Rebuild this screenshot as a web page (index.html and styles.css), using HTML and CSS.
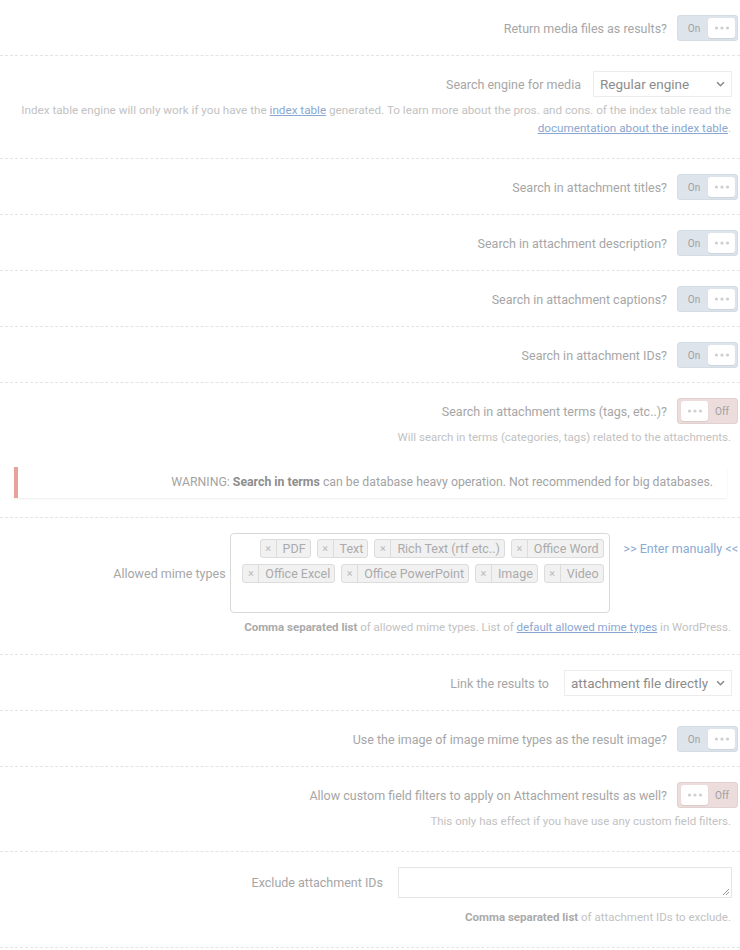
FILE: index.html
```html
<!DOCTYPE html>
<html>
<head>
<meta charset="utf-8">
<link rel="stylesheet" href="styles.css">
</head>
<body>
<div class="page">
  <div class="row">
    <div class="line"><span class="label">Return media files as results?</span><span class="toggle on"><span class="state">On</span><span class="knob"><svg width="16" height="4" viewBox="0 0 16 4"><circle cx="2.5" cy="2" r="1.6"/><circle cx="8" cy="2" r="1.6"/><circle cx="13.5" cy="2" r="1.6"/></svg></span></span></div>
  </div>
  <div class="row">
    <div class="line"><span class="label gap12">Search engine for media</span><span class="select sel-engine"><span>Regular engine</span><svg width="9" height="6" viewBox="0 0 10 7"><path d="M1 1.5 L5 5.5 L9 1.5" fill="none" stroke="#888" stroke-width="1.8"/></svg></span></div>
    <div class="desc wide">Index table engine will only work if you have the <a href="#">index table</a> generated. To learn more about the pros. and cons. of the index table read the <a href="#">documentation about the index table</a>.</div>
  </div>
  <div class="row">
    <div class="line"><span class="label">Search in attachment titles?</span><span class="toggle on"><span class="state">On</span><span class="knob"><svg width="16" height="4" viewBox="0 0 16 4"><circle cx="2.5" cy="2" r="1.6"/><circle cx="8" cy="2" r="1.6"/><circle cx="13.5" cy="2" r="1.6"/></svg></span></span></div>
  </div>
  <div class="row">
    <div class="line"><span class="label">Search in attachment description?</span><span class="toggle on"><span class="state">On</span><span class="knob"><svg width="16" height="4" viewBox="0 0 16 4"><circle cx="2.5" cy="2" r="1.6"/><circle cx="8" cy="2" r="1.6"/><circle cx="13.5" cy="2" r="1.6"/></svg></span></span></div>
  </div>
  <div class="row">
    <div class="line"><span class="label">Search in attachment captions?</span><span class="toggle on"><span class="state">On</span><span class="knob"><svg width="16" height="4" viewBox="0 0 16 4"><circle cx="2.5" cy="2" r="1.6"/><circle cx="8" cy="2" r="1.6"/><circle cx="13.5" cy="2" r="1.6"/></svg></span></span></div>
  </div>
  <div class="row">
    <div class="line"><span class="label">Search in attachment IDs?</span><span class="toggle on"><span class="state">On</span><span class="knob"><svg width="16" height="4" viewBox="0 0 16 4"><circle cx="2.5" cy="2" r="1.6"/><circle cx="8" cy="2" r="1.6"/><circle cx="13.5" cy="2" r="1.6"/></svg></span></span></div>
  </div>
  <div class="row">
    <div class="line"><span class="label">Search in attachment terms (tags, etc..)?</span><span class="toggle off"><span class="knob"><svg width="16" height="4" viewBox="0 0 16 4"><circle cx="2.5" cy="2" r="1.6"/><circle cx="8" cy="2" r="1.6"/><circle cx="13.5" cy="2" r="1.6"/></svg></span><span class="state">Off</span></span></div>
    <div class="desc">Will search in terms (categories, tags) related to the attachments.</div>
    <div class="warning">WARNING: <b>Search in terms</b> can be database heavy operation. Not recommended for big databases.</div>
  </div>
  <div class="row">
    <div class="line top"><span class="label mime-label">Allowed mime types</span>
      <div class="tagbox">
        <span class="tag"><span class="x">×</span><span class="t">PDF</span></span><span class="tag"><span class="x">×</span><span class="t">Text</span></span><span class="tag"><span class="x">×</span><span class="t">Rich Text (rtf etc..)</span></span><span class="tag"><span class="x">×</span><span class="t">Office Word</span></span><span class="tag"><span class="x">×</span><span class="t">Office Excel</span></span><span class="tag"><span class="x">×</span><span class="t">Office PowerPoint</span></span><span class="tag"><span class="x">×</span><span class="t">Image</span></span><span class="tag"><span class="x">×</span><span class="t">Video</span></span>
      </div>
      <span class="manual">&gt;&gt; Enter manually &lt;&lt;</span>
    </div>
    <div class="desc mdesc"><b>Comma separated list</b> of allowed mime types. List of <a href="#">default allowed mime types</a> in WordPress.</div>
  </div>
  <div class="row">
    <div class="line"><span class="label gap15">Link the results to</span><span class="select sel-link"><span>attachment file directly</span><svg width="9" height="6" viewBox="0 0 10 7"><path d="M1 1.5 L5 5.5 L9 1.5" fill="none" stroke="#888" stroke-width="1.8"/></svg></span></div>
  </div>
  <div class="row">
    <div class="line"><span class="label">Use the image of image mime types as the result image?</span><span class="toggle on"><span class="state">On</span><span class="knob"><svg width="16" height="4" viewBox="0 0 16 4"><circle cx="2.5" cy="2" r="1.6"/><circle cx="8" cy="2" r="1.6"/><circle cx="13.5" cy="2" r="1.6"/></svg></span></span></div>
  </div>
  <div class="row">
    <div class="line"><span class="label">Allow custom field filters to apply on Attachment results as well?</span><span class="toggle off"><span class="knob"><svg width="16" height="4" viewBox="0 0 16 4"><circle cx="2.5" cy="2" r="1.6"/><circle cx="8" cy="2" r="1.6"/><circle cx="13.5" cy="2" r="1.6"/></svg></span><span class="state">Off</span></span></div>
    <div class="desc">This only has effect if you have use any custom field filters.</div>
  </div>
  <div class="row">
    <div class="line"><span class="label gap15">Exclude attachment IDs</span><span class="textarea"><svg class="grip" width="9" height="9" viewBox="0 0 9 9"><path d="M8 2 L2 8 M8 5 L5 8" stroke="#999" stroke-width="1"/></svg></span></div>
    <div class="desc tdesc"><b>Comma separated list</b> of attachment IDs to exclude.</div>
  </div>
</div>
</body>
</html>
```

FILE: styles.css
```css
* { box-sizing: border-box; }
html, body { margin: 0; padding: 0; background: #ffffff; }
body {
  font-family: Roboto, "Open Sans", "DejaVu Sans", sans-serif;
  color: #a6a6a6;
  font-size: 12.5px;
}
.page { width: 740px; }
.row {
  padding: 15px 2px 14px 14px;
  border-bottom: 1px dashed #e4e4e4;
}
.line {
  display: flex;
  justify-content: flex-end;
  align-items: center;
}
.line.top { align-items: flex-start; }
.label { margin-right: 10px; font-size: 12.5px; color: #a6a6a6; }
.label.gap12 { margin-right: 12px; }
.label.gap15 { margin-right: 15px; }
.toggle {
  width: 61px;
  height: 26px;
  border-radius: 3px;
  display: flex;
  align-items: center;
  padding: 0 2px 0 3px;
  justify-content: space-between;
}
.toggle.on { background: #dde4eb; border: 1px solid #d3dbe3; }
.toggle.off { background: #ecdcdc; border: 1px solid #e3d1d1; }
.state { font-size: 10px; color: #9f9f9f; width: 26px; text-align: center; }
.knob {
  width: 27px;
  height: 20px;
  background: #fff;
  border-radius: 3px;
  box-shadow: 0 1px 1px rgba(0,0,0,0.08);
  display: flex;
  align-items: center;
  justify-content: center;
}
.knob svg { fill: #cfcfcf; display: block; }
.select {
  height: 26px;
  border: 1px solid #ececec;
  background: #fff;
  display: flex;
  align-items: center;
  justify-content: space-between;
  padding: 0 6px 0 6px;
  font-size: 13.5px;
  color: #8c8c8c;
  margin-right: 6px;
}
.sel-engine { width: 139px; }
.sel-link { width: 168px; }
.desc {
  text-align: right;
  font-size: 11.5px;
  line-height: 18px;
  color: #c2c2c2;
  margin-top: 4px;
  padding-right: 7px;
  margin-bottom: 7px;
}
.desc.wide { font-size: 11.7px; }
.desc b { color: #aaaaaa; font-weight: bold; }
.desc a { color: #8aa7d2; text-decoration: underline; }
.warning {
  margin: 21px 11px 5px 0;
  height: 31px;
  border-left: 4px solid #e8a29c;
  background: #fff;
  box-shadow: 0 1px 2px rgba(0,0,0,0.07);
  text-align: right;
  padding: 0 14px 0 0;
  line-height: 31px;
  font-size: 12.3px;
  color: #a3a3a3;
}
.warning b { color: #8e8e8e; }
.mime-label { margin-top: 33px; margin-right: 4px; }
.tagbox {
  width: 380px;
  height: 80px;
  border: 1px solid #d8d8d8;
  border-radius: 4px;
  text-align: right;
  padding: 5px 5px 0 5px;
  line-height: 0;
}
.tag {
  display: inline-flex;
  align-items: center;
  height: 19px;
  margin: 0 0 6px 6px;
  border: 1px solid #dcdcdc;
  border-radius: 3px;
  background: #f1f1f1;
  color: #ababab;
  font-size: 12.5px;
  line-height: 17px;
  vertical-align: top;
}
.tag .x { width: 16px; text-align: center; border-right: 1px solid #dcdcdc; font-size: 11px; color: #bbb; }
.tag .t { padding: 0 4px 0 6px; }
.manual { margin-left: 14px; margin-top: 8px; color: #8aaad4; font-size: 12.5px; }
.textarea {
  width: 334px;
  height: 31px;
  border: 1px solid #e6e6e6;
  background: #fff;
  margin-right: 6px;
  position: relative;
}
.grip { position: absolute; right: 1px; bottom: 1px; }
.mdesc { margin-top: 5px; margin-bottom: 4px; }
.tdesc { margin-top: 10px; }
```
